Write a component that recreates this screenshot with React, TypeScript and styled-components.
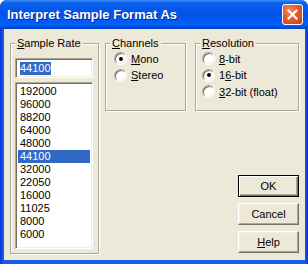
import React from 'react';
import styled, { createGlobalStyle } from 'styled-components';

const GlobalStyle = createGlobalStyle`
    html, body {
        margin: 0;
        padding: 0;
        background: #ffffff;
    }
    body {
        font-family: Tahoma, "Liberation Sans", Arial, sans-serif;
        font-size: 11px;
        color: #000;
    }
    * { box-sizing: border-box; }
`;

const sampleRates = ['192000', '96000', '88200', '64000', '48000', '44100', '32000', '22050', '16000', '11025', '8000', '6000'];

const channels = [
    { key: 'M', rest: 'ono', checked: true },
    { key: 'S', rest: 'tereo', checked: false },
];

const resolutions = [
    { before: '', key: '8', rest: '-bit', checked: false },
    { before: '1', key: '6', rest: '-bit', checked: true },
    { before: '', key: '3', rest: '2-bit (float)', checked: false },
];

const Window = styled.div`
    width: 308px;
    height: 264px;
    display: flex;
    flex-direction: column;
    border-radius: 7px 7px 0 0;
    overflow: hidden;
    background: #0831d9;
`;

const TitleBar = styled.div`
    height: 29px;
    flex: none;
    display: flex;
    align-items: center;
    padding: 0 5px 0 7px;
    background: linear-gradient(
        to bottom,
        #3d8ef8 0%,
        #0a5fee 10%,
        #0055e8 45%,
        #0060f8 85%,
        #0050e0 93%,
        #003fc0 100%
    );
`;

const Title = styled.div`
    flex: 1;
    color: #fff;
    font-family: "Liberation Sans", Arial, sans-serif;
    font-weight: bold;
    font-size: 13px;
    text-shadow: 1px 1px 0 #0a1e8c;
    white-space: nowrap;
`;

const CloseButton = styled.div`
    width: 21px;
    height: 21px;
    border: 1px solid #fff;
    border-radius: 3px;
    display: grid;
    place-items: center;
    background: radial-gradient(circle at 35% 30%, #f08a62 0%, #e25a30 45%, #c8401a 100%);
`;

const Frame = styled.div`
    flex: 1;
    display: flex;
    padding: 0 3px 4px 4px;
    background: linear-gradient(to right, #0831d9, #1a5ae8 3px, #1a5ae8 calc(100% - 3px), #0831d9);
`;

const Client = styled.div`
    flex: 1;
    display: flex;
    gap: 6px;
    padding: 14px 6px 6px 6px;
    background: #ece9d8;
`;

const GroupBox = styled.div<{ $inset: number }>`
    display: flex;
    flex-direction: column;
    border: 1px solid #aca899;
    box-shadow: 1px 1px 0 #fff, inset 1px 1px 0 #fff;
    padding: 0 5px 4px ${(p) => p.$inset}px;
`;

const SampleGroup = styled(GroupBox)`
    width: 89px;
`;

// caption sits on the group's top line; offset undoes the group's left inset
const Caption = styled.div<{ $inset: number }>`
    width: fit-content;
    margin: -7px 0 0 ${(p) => 4 - p.$inset}px;
    padding: 0 2px;
    line-height: 13px;
    height: 13px;
    background: #ece9d8;
    white-space: nowrap;
`;

const Key = styled.span`
    text-decoration: underline;
    text-underline-offset: 1px;
`;

const Sunken = styled.div`
    border: 1px solid;
    border-color: #aca899 #fff #fff #aca899;
    box-shadow: inset 1px 1px 0 #716f64, inset -1px -1px 0 #f1efe2;
    background: #fff;
`;

const EditField = styled(Sunken)`
    height: 20px;
    margin-top: 8px;
    display: flex;
    align-items: center;
    padding: 0 0 0 4px;
`;

const Selected = styled.span`
    background: #316ac5;
    color: #fff;
    line-height: 13px;
`;

const ListBox = styled(Sunken)`
    flex: 1;
    margin-top: 4px;
    padding: 2px;
`;

const ListItem = styled.div<{ $active: boolean }>`
    height: 13px;
    line-height: 13px;
    padding-left: 2px;
    background: ${(p) => (p.$active ? '#316ac5' : 'transparent')};
    color: ${(p) => (p.$active ? '#fff' : '#000')};
`;

const RightSide = styled.div`
    flex: 1;
    display: flex;
    flex-direction: column;
    justify-content: space-between;
    align-items: flex-end;
`;

const TopRow = styled.div`
    display: flex;
    gap: 9px;
    width: 100%;
`;

const OptionGroup = styled(GroupBox)<{ $width: number }>`
    width: ${(p) => p.$width}px;
    height: 68px;
    gap: 0.5px;
`;

const RadioRow = styled.div`
    display: flex;
    align-items: center;
    height: 16px;
    &:first-of-type {
        margin-top: 6px;
    }
`;

const RadioCircle = styled.span<{ $on: boolean }>`
    width: 13px;
    height: 13px;
    flex: none;
    border-radius: 50%;
    border: 1px solid;
    border-color: #aca899 #fff #fff #aca899;
    box-shadow: inset 1px 1px 0 #716f64, inset -1px -1px 0 #f1efe2;
    background: #fff;
    display: grid;
    place-items: center;
    margin-right: 4px;
    &::after {
        content: '';
        width: 4px;
        height: 4px;
        border-radius: 50%;
        background: ${(p) => (p.$on ? '#000' : 'transparent')};
    }
`;

const ButtonColumn = styled.div`
    display: flex;
    flex-direction: column;
    gap: 6px;
    padding-bottom: 1px;
`;

const Button = styled.div<{ $default?: boolean }>`
    width: 61px;
    height: 22px;
    display: grid;
    place-items: center;
    background: #ece9d8;
    border: 1px solid;
    border-color: ${(p) => (p.$default ? '#000' : '#fff #716f64 #716f64 #fff')};
    box-shadow: ${(p) =>
        p.$default
            ? 'inset 1px 1px 0 #fff, inset -1px -1px 0 #716f64, inset -2px -2px 0 #aca899'
            : 'inset -1px -1px 0 #aca899, inset 1px 1px 0 #f1efe2'};
`;

const RadioOption = ({ on, children }: { on: boolean; children: React.ReactNode }) => (
    <RadioRow>
        <RadioCircle $on={on} />
        <span>{children}</span>
    </RadioRow>
);

export default function App() {
    return (
        <>
            <GlobalStyle />
            <Window>
                <TitleBar>
                    <Title>Interpret Sample Format As</Title>
                    <CloseButton>
                        <svg width="11" height="11" viewBox="0 0 11 11">
                            <path d="M1.5 1.5 L9.5 9.5 M9.5 1.5 L1.5 9.5" stroke="#fff" strokeWidth="2.2" strokeLinecap="square" />
                        </svg>
                    </CloseButton>
                </TitleBar>
                <Frame>
                    <Client>
                        <SampleGroup $inset={4}>
                            <Caption $inset={4}>
                                <Key>S</Key>ample Rate
                            </Caption>
                            <EditField>
                                <Selected>44100</Selected>
                            </EditField>
                            <ListBox>
                                {sampleRates.map((rate) => (
                                    <ListItem key={rate} $active={rate === '44100'}>
                                        {rate}
                                    </ListItem>
                                ))}
                            </ListBox>
                        </SampleGroup>
                        <RightSide>
                            <TopRow>
                                <OptionGroup $inset={8} $width={81}>
                                    <Caption $inset={8}>
                                        <Key>C</Key>hannels
                                    </Caption>
                                    {channels.map((c) => (
                                        <RadioOption key={c.key} on={c.checked}>
                                            <Key>{c.key}</Key>
                                            {c.rest}
                                        </RadioOption>
                                    ))}
                                </OptionGroup>
                                <OptionGroup $inset={6} $width={104}>
                                    <Caption $inset={6}>
                                        <Key>R</Key>esolution
                                    </Caption>
                                    {resolutions.map((r) => (
                                        <RadioOption key={r.before + r.key} on={r.checked}>
                                            {r.before}
                                            <Key>{r.key}</Key>
                                            {r.rest}
                                        </RadioOption>
                                    ))}
                                </OptionGroup>
                            </TopRow>
                            <ButtonColumn>
                                <Button $default>OK</Button>
                                <Button>Cancel</Button>
                                <Button>
                                    <span>
                                        <Key>H</Key>elp
                                    </span>
                                </Button>
                            </ButtonColumn>
                        </RightSide>
                    </Client>
                </Frame>
            </Window>
        </>
    );
}
